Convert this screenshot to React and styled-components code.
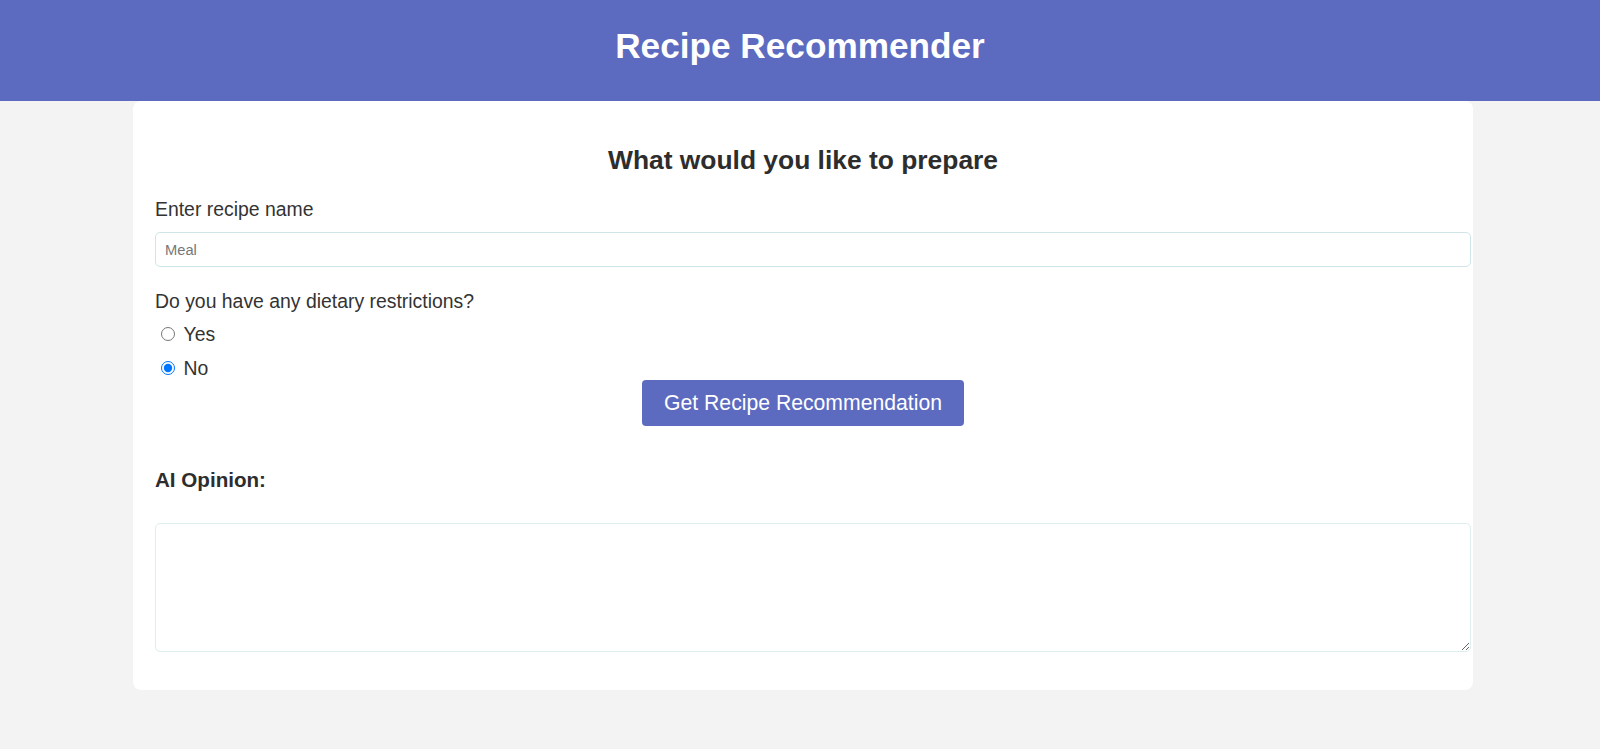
import React from "react"
import { useState } from "react"
import styled, { createGlobalStyle } from "styled-components"

const GlobalStyle = createGlobalStyle`
            html, body {
                        margin: 0;
                        padding: 0;
                        background: #f3f3f3;
                        font-family: "Liberation Sans", Arial, sans-serif;
                        color: #333;
            }
`

function App(){
            const [recipe, setRecipe] = useState("");
            const [restricted, setRestricted] = useState("no");
            const [opinion, setOpinion] = useState("");

            function getRecommendation(e){
                        e.preventDefault()
                        setOpinion("")
            }

            return(
                        <>
                        <GlobalStyle/>
                        <Header>
                        <Title>Recipe Recommender</Title>
                        </Header>
                        <Main>
                        <Card onSubmit={getRecommendation}>
                        <Heading>What would you like to prepare</Heading>
                        <Label htmlFor="recipe">Enter recipe name</Label>
                        <TextInput id="recipe" type="text" placeholder="Meal" value={recipe} onChange={e=> setRecipe(e.target.value)}/>
                        <Question>Do you have any dietary restrictions?</Question>
                        <Options>
                        <Option>
                        <Radio type="radio" name="diet" value="yes" checked={restricted === "yes"} onChange={()=> setRestricted("yes")}/>
                        Yes
                        </Option>
                        <Option>
                        <Radio type="radio" name="diet" value="no" checked={restricted === "no"} onChange={()=> setRestricted("no")}/>
                        No
                        </Option>
                        </Options>
                        <SubmitButton type="submit">Get Recipe Recommendation</SubmitButton>
                        <Subheading>AI Opinion:</Subheading>
                        <OpinionBox value={opinion} onChange={e=> setOpinion(e.target.value)}/>
                        </Card>
                        </Main>
                        </>
            )
};

const Header = styled.header`
            background-color: #5c6bc0;
            padding: 26px 0 35px;
            text-align: center;
`

const Title = styled.h1`
            margin: 0;
            font-size: 35.2px;
            line-height: 40px;
            font-weight: bold;
            color: white;
`

const Main = styled.main`
            display: flex;
            justify-content: center;
            padding-left: 6px;
`

const Card = styled.form`
            box-sizing: border-box;
            width: 1340px;
            padding: 44px 22px 38px;
            background: white;
            border-radius: 8px;
            display: flex;
            flex-direction: column;
`

const Heading = styled.h2`
            margin: 0;
            font-size: 26.4px;
            line-height: 30px;
            text-align: center;
            color: #2d2d2d;
`

const Label = styled.label`
            margin-top: 23px;
            font-size: 19.4px;
            line-height: 22px;
`

const TextInput = styled.input`
            box-sizing: content-box;
            width: 100%;
            height: 33px;
            margin: 12px 0 0;
            padding: 0 9px;
            border: 1px solid #cfe5e8;
            border-radius: 5px;
            font-family: "Liberation Sans", Arial, sans-serif;
            font-size: 14.7px;
            color: #333;
            outline: none;

            &::placeholder{
                        color: #777;
            }
`

const Question = styled.p`
            margin: 23px 0 0;
            font-size: 19.4px;
            line-height: 22px;
`

const Options = styled.div`
            margin-top: 11px;
            display: flex;
            flex-direction: column;
            gap: 12px;
`

const Option = styled.label`
            display: flex;
            align-items: center;
            font-size: 19.4px;
            line-height: 22px;
`

const Radio = styled.input`
            width: 14px;
            height: 14px;
            margin: 0 9px 0 5.5px;
`

const SubmitButton = styled.button`
            align-self: center;
            margin-top: 1px;
            height: 46px;
            padding: 0 22px;
            border: none;
            border-radius: 4px;
            background-color: #5c6bc0;
            color: white;
            font-family: "Liberation Sans", Arial, sans-serif;
            font-size: 21.2px;
            cursor: pointer;
`

const Subheading = styled.h3`
            margin: 42px 0 0;
            font-size: 20.6px;
            line-height: 24px;
            color: #2d2d2d;
`

const OpinionBox = styled.textarea`
            box-sizing: content-box;
            width: 100%;
            height: 127px;
            margin: 31px 0 0;
            padding: 0 9px;
            border: 1px solid #ddedf0;
            border-radius: 5px;
            font-family: "Liberation Sans", Arial, sans-serif;
            font-size: 14.7px;
            outline: none;
`

export default App;
